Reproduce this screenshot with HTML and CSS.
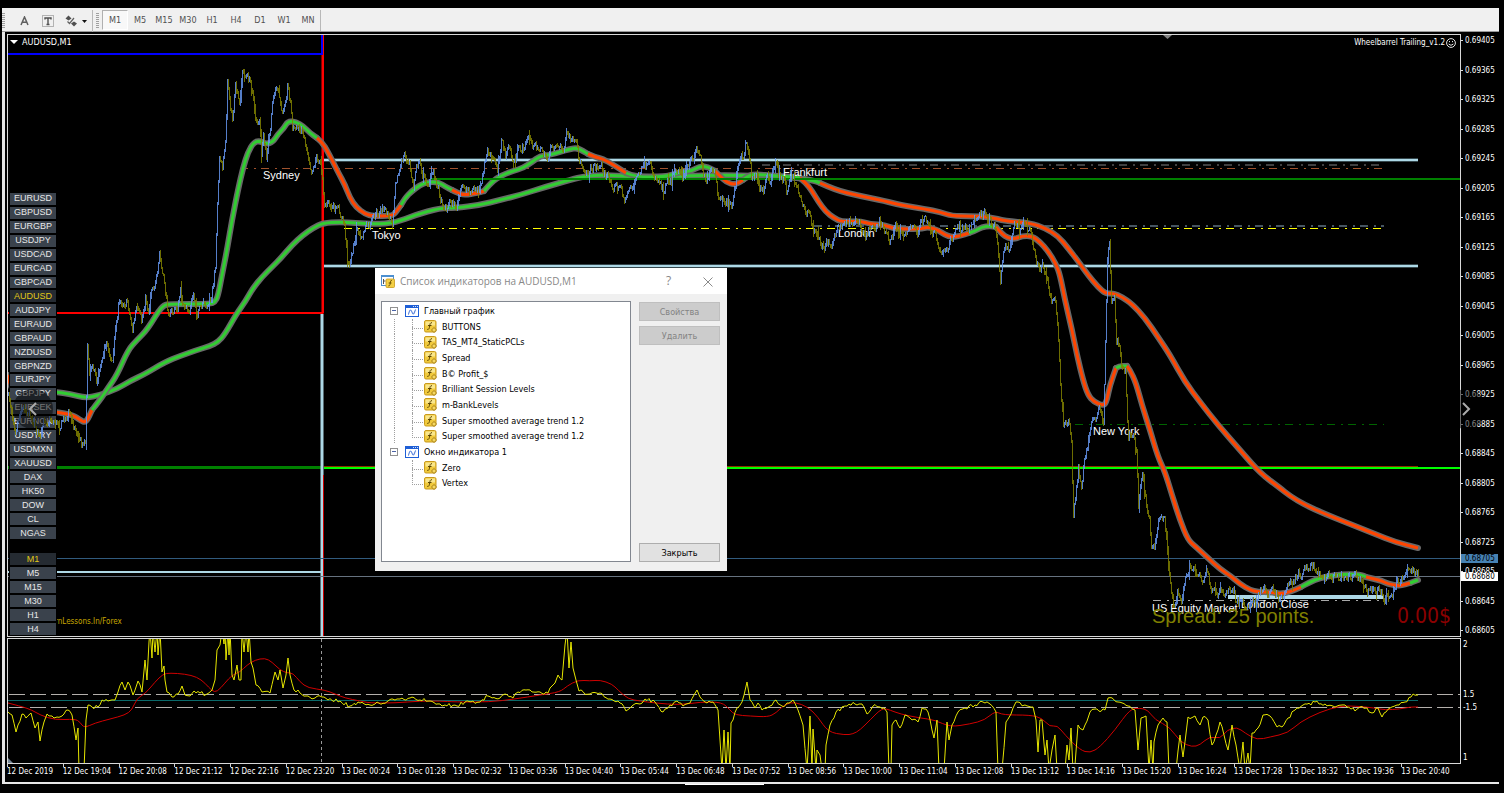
FILE: index.html
```html
<!DOCTYPE html>
<html lang="ru">
<head>
    <meta charset="UTF-8">
    <meta name="viewport" content="width=device-width, initial-scale=1.0">
    <title>AUDUSD,M1</title>
    <link rel="stylesheet" href="styles.css">
</head>
<body>
    <!-- shared icons -->
    <svg class="sprite" aria-hidden="true">
        <symbol id="icon-window" viewBox="0 0 14 12">
            <rect x="0.5" y="0.5" width="13" height="11" fill="#fff" stroke="#1f5fd6"/>
            <rect x="0" y="0" width="14" height="3" fill="#1f5fd6"/>
            <path d="M8 1.5h1M10 1.5h1M12 1.5h1" stroke="#fff" stroke-width="0.8"/>
            <path d="M3 9.5C4 9.5 4 5 5.5 5S7 9 8.300 9S9.500 5 11 4.500" fill="none" stroke="#5c86dd" stroke-width="1.200"/>
        </symbol>
        <symbol id="icon-function" viewBox="0 0 13 13">
            <rect x="0.5" y="0.5" width="11.500" height="11.500" rx="1.500" fill="#f0c93c" stroke="#c99a1c"/>
            <rect x="1.500" y="1.500" width="9.500" height="4" fill="#f9e68c"/>
            <path d="M8 2.800C6.200 2.200 6 4 5.700 6S5 9.800 3.300 9.400M4 5.500h3.500" fill="none" stroke="#5a4300" stroke-width="1"/>
            <path d="M10 7.500l2.500 2.500L10 12.500L7.500 10z" fill="#f6d860" stroke="#9c7410" stroke-width="0.900"/>
        </symbol>
    </svg>

    <div class="toolbar">
        <span class="grip"></span>
        <button class="tool" aria-label="Text"><svg width="9" height="10" viewBox="0 0 9 10"><path d="M1 9L4.500 1L8 9M2.500 6.200h4" fill="none" stroke="#606060" stroke-width="1.500"/></svg></button>
        <button class="tool" aria-label="Text label"><svg width="12" height="12" viewBox="0 0 12 12"><rect x="0.5" y="0.5" width="11" height="11" fill="none" stroke="#777" stroke-dasharray="1 1"/><path d="M3 4.500V3h6v1.500M6 3v6.500M4.500 9.500h3" fill="none" stroke="#505050" stroke-width="1.400"/></svg></button>
        <button class="tool wide" aria-label="Arrows"><svg width="22" height="12" viewBox="0 0 22 12"><path d="M3.500 0.500l3 3-3 2-3-2z" fill="#505050"/><path d="M9 11.500l-3-3 3-2 3 2z" fill="#505050"/><path d="M2.500 6.500l2 2 4.500-5.500" fill="none" stroke="#606060" stroke-width="1.200"/><path d="M17 5h5l-2.500 3z" fill="#111"/></svg></button>
        <span class="separator"></span>
        <span class="grip"></span>
        <div class="periods">
            <button class="active">M1</button>
            <button>M5</button>
            <button>M15</button>
            <button>M30</button>
            <button>H1</button>
            <button>H4</button>
            <button>D1</button>
            <button>W1</button>
            <button>MN</button>
        </div>
    </div>

    <main class="terminal">
        <div class="row main-row">
            <section class="pane main-pane">
                <svg class="layer" viewBox="8 35 1452 601" preserveAspectRatio="none">
                    <g fill="none">
                        <path d="M323.500 35V313" stroke="#f00" stroke-width="1"/>
                        <path d="M322.500 55V313H8" stroke="#f00" stroke-width="2"/>
                        <path d="M8 54H322V35" stroke="#00f" stroke-width="2"/>
                        <path d="M8 467.500H322" stroke="#008000" stroke-width="3"/>
                        <path d="M8 572H322" stroke="#add8e6" stroke-width="2"/>
                        <path d="M322 314V636" stroke="#add8e6" stroke-width="3"/>
                        <path d="M323.500 475V636" stroke="#c00" stroke-width="1"/>
                        <path d="M324 160H1418M324 266H1418" stroke="#35474c" stroke-width="4"/>
                        <path d="M324 160H1418M324 266H1418" stroke="#add8e6" stroke-width="2"/>
                        <path d="M240 168.500H1384" stroke="#a0522d" stroke-dasharray="8 6 2 5"/>
                        <path d="M762 165H1384" stroke="#404040" stroke-width="2" stroke-dasharray="8 6 2 5"/>
                        <path d="M344 228.500H1384" stroke="#ff0" stroke-dasharray="8 6 2 5"/>
                        <path d="M814 226H1384" stroke="#465560" stroke-width="2" stroke-dasharray="8 6 2 5"/>
                        <path d="M1075 424.500H1384" stroke="#006400" stroke-dasharray="8 6 2 5"/>
                        <path d="M1153 600.500H1384" stroke="#a9a9a9" stroke-dasharray="8 6 2 5"/>
                        <path d="M324 466.500H1418" stroke="#8b3000" stroke-width="1"/>
                        <path d="M324 468H1460" stroke="#0f0" stroke-width="2"/>
                        <path d="M8 558.500H1460" stroke="#315b7e"/>
                        <path d="M8 576.500H1460" stroke="#66727f"/>
                        <path d="M1228 597H1384" stroke="#add8e6" stroke-width="4"/>
                    </g>
                    <g id="averages"></g>
                    <path d="M430 179H1460" stroke="#008000" stroke-width="2"/>
                    <path d="M1163 35h9l-4.500 4z" fill="#808080"/>
                </svg>
                <h1 class="symbol">AUDUSD,M1</h1>
                <span class="expert">Wheelbarrel Trailing_v1.2
                    <svg width="10" height="10" viewBox="0 0 10 10"><circle cx="5" cy="5" r="4.400" fill="none" stroke="#fff" stroke-width="0.900"/><path d="M3.500 3v1.200M6.500 3v1.200M2.600 6Q5 8.600 7.400 6" fill="none" stroke="#fff" stroke-width="0.900"/></svg>
                </span>
                <span class="copyright">www.LearnLessons.In/Forex</span>

                <span class="session sydney">Sydney</span>
                <span class="session tokyo">Tokyo</span>
                <span class="session frankfurt">Frankfurt</span>
                <span class="session london">London</span>
                <span class="session new-york">New York</span>
                <span class="session us-equity">US Equity Market</span>
                <span class="session london-close">London Close</span>
                <span class="spread">Spread: 25 points.</span>
                <span class="profit">0.00$</span>

                <div class="symbols">
                    <button>EURUSD</button>
                    <button>GBPUSD</button>
                    <button>EURGBP</button>
                    <button>USDJPY</button>
                    <button>USDCAD</button>
                    <button>EURCAD</button>
                    <button>GBPCAD</button>
                    <button class="current">AUDUSD</button>
                    <button>AUDJPY</button>
                    <button>EURAUD</button>
                    <button>GBPAUD</button>
                    <button>NZDUSD</button>
                    <button>GBPNZD</button>
                    <button>EURJPY</button>
                    <button>GBPJPY</button>
                    <button>EURSEK</button>
                    <button>EURNOK</button>
                    <button>USDTRY</button>
                    <button>USDMXN</button>
                    <button>XAUUSD</button>
                    <button>DAX</button>
                    <button>HK50</button>
                    <button>DOW</button>
                    <button>CL</button>
                    <button>NGAS</button>
                </div>
                <div class="symbols timeframes">
                    <button class="current">M1</button>
                    <button>M5</button>
                    <button>M15</button>
                    <button>M30</button>
                    <button>H1</button>
                    <button>H4</button>
                </div>
                <svg class="layer candles" viewBox="8 35 1452 601" preserveAspectRatio="none">
                    <path id="bears" stroke="#808000"/>
                    <path id="bulls" stroke="#6495ed"/>
                </svg>
            </section>
            <div class="scale">
                <ol class="prices">
                    <li>0.69405</li>
                    <li>0.69365</li>
                    <li>0.69325</li>
                    <li>0.69285</li>
                    <li>0.69245</li>
                    <li>0.69205</li>
                    <li>0.69165</li>
                    <li>0.69125</li>
                    <li>0.69085</li>
                    <li>0.69045</li>
                    <li>0.69005</li>
                    <li>0.68965</li>
                    <li>0.68925</li>
                    <li>0.68885</li>
                    <li>0.68845</li>
                    <li>0.68805</li>
                    <li>0.68765</li>
                    <li>0.68725</li>
                    <li>0.68685</li>
                    <li>0.68645</li>
                    <li>0.68605</li>
                </ol>
                <span class="tag ask">0.68705</span>
                <span class="tag bid">0.68680</span>
            </div>
        </div>

        <div class="row sub-row">
            <section class="pane sub-pane">
                <svg class="layer" viewBox="8 639 1452 124" preserveAspectRatio="none">
                    <g fill="none">
                        <path d="M8 694.500H1460M8 707.500H1460" stroke="#b4b0ac" stroke-dasharray="16 5" stroke-dashoffset="-1"/>
                        <path d="M8 700.500H1418" stroke="#0a6a6a" stroke-width="1"/>
                        <path d="M321.500 639V763" stroke="#999" stroke-dasharray="3 3"/>
                        <path id="signal" stroke="#d00000"/>
                        <path id="vertex" stroke="#e6e600"/>
                    </g>
                    <path d="M8 758l5 5H8z" fill="#778899"/>
                </svg>
            </section>
            <div class="scale levels">
                <span>2</span>
                <span class="upper">1.5</span>
                <span class="lower">-1.5</span>
                <span class="bottom">1</span>
            </div>
        </div>

        <ol class="times">
            <li>12 Dec 2019</li>
            <li>12 Dec 19:04</li>
            <li>12 Dec 20:08</li>
            <li>12 Dec 21:12</li>
            <li>12 Dec 22:16</li>
            <li>12 Dec 23:20</li>
            <li>13 Dec 00:24</li>
            <li>13 Dec 01:28</li>
            <li>13 Dec 02:32</li>
            <li>13 Dec 03:36</li>
            <li>13 Dec 04:40</li>
            <li>13 Dec 05:44</li>
            <li>13 Dec 06:48</li>
            <li>13 Dec 07:52</li>
            <li>13 Dec 08:56</li>
            <li>13 Dec 10:00</li>
            <li>13 Dec 11:04</li>
            <li>13 Dec 12:08</li>
            <li>13 Dec 13:12</li>
            <li>13 Dec 14:16</li>
            <li>13 Dec 15:20</li>
            <li>13 Dec 16:24</li>
            <li>13 Dec 17:28</li>
            <li>13 Dec 18:32</li>
            <li>13 Dec 19:36</li>
            <li>13 Dec 20:40</li>
        </ol>
    </main>
    <div class="tab-mark"></div>

    <button class="nav prev" aria-label="Previous"><svg width="10" height="16" viewBox="0 0 10 16"><path d="M8 2L2 8l6 6" fill="none" stroke="#aaa" stroke-width="2"/></svg></button>
    <button class="nav next" aria-label="Next"><svg width="10" height="16" viewBox="0 0 10 16"><path d="M2 2l6 6-6 6" fill="none" stroke="#aaa" stroke-width="2"/></svg></button>

    <div class="dialog" role="dialog" aria-labelledby="dialogTitle">
        <div class="dialog-title">
            <svg width="14" height="13" viewBox="0 0 14 13"><rect x="0.5" y="0.5" width="12" height="10" fill="#fff" stroke="#4c8fd0"/><path d="M0 1h13" stroke="#4c8fd0" stroke-width="2"/><path d="M2.500 4v5M2.500 6h2" stroke="#555" stroke-width="1"/><rect x="5" y="4" width="8.500" height="8.500" rx="1" fill="#f3cf45" stroke="#c99a1c" stroke-width="0.800"/><path d="M10.800 5.500C9 5 9.500 8 9 9.500S8 11 7.300 10.800M7.700 8h2.800" fill="none" stroke="#5a4300" stroke-width="0.900"/></svg>
            <h2 id="dialogTitle">Список индикаторов на AUDUSD,M1</h2>
            <button aria-label="Help"><span>?</span></button>
            <button aria-label="Close"><svg width="10" height="10" viewBox="0 0 10 10"><path d="M0.500 0.500l9 9M9.500 0.500l-9 9" stroke="#8a8a8a" fill="none"/></svg></button>
        </div>
        <div class="dialog-body">
            <div class="tree">
                <ul>
                    <li class="group open"><i class="toggle"></i><svg class="win"><use href="#icon-window"/></svg>Главный график</li>
                    <li class="leaf inner"><svg class="fn"><use href="#icon-function"/></svg>BUTTONS</li>
                    <li class="leaf inner"><svg class="fn"><use href="#icon-function"/></svg>TAS_MT4_StaticPCLs</li>
                    <li class="leaf inner"><svg class="fn"><use href="#icon-function"/></svg>Spread</li>
                    <li class="leaf inner"><svg class="fn"><use href="#icon-function"/></svg>B© Profit_$</li>
                    <li class="leaf inner"><svg class="fn"><use href="#icon-function"/></svg>Brilliant Session Levels</li>
                    <li class="leaf inner"><svg class="fn"><use href="#icon-function"/></svg>m-BankLevels</li>
                    <li class="leaf inner"><svg class="fn"><use href="#icon-function"/></svg>Super smoothed average trend 1.2</li>
                    <li class="leaf inner last"><svg class="fn"><use href="#icon-function"/></svg>Super smoothed average trend 1.2</li>
                    <li class="group"><i class="toggle"></i><svg class="win"><use href="#icon-window"/></svg>Окно индикатора 1</li>
                    <li class="leaf"><svg class="fn"><use href="#icon-function"/></svg>Zero</li>
                    <li class="leaf last"><svg class="fn"><use href="#icon-function"/></svg>Vertex</li>
                </ul>
            </div>
            <div class="actions">
                <button disabled>Свойства</button>
                <button disabled>Удалить</button>
                <button class="close">Закрыть</button>
            </div>
        </div>
    </div>

    <script src="chart.js"></script>
</body>
</html>
```
FILE: styles.css
```css
* {
    box-sizing: border-box;
}
body {
    margin: 0;
    padding: 8px 5px 8px 2px;
    height: 100vh;
    display: flex;
    flex-direction: column;
    background-color: #000;
    color: #fff;
    font-family: "DejaVu Sans Condensed", "Open Sans", sans-serif;
    font-size: 8px;
    line-height: 12px;
}
button {
    font: inherit;
    color: inherit;
    padding: 0;
    border: none;
    background: none;
}
h1, h2, ol, ul {
    margin: 0;
    padding: 0;
    font-weight: normal;
    list-style: none;
}
.sprite {
    position: absolute;
    width: 0;
    height: 0;
}

/* Toolbar */
.toolbar {
    height: 24px;
    flex: none;
    display: flex;
    align-items: center;
    padding-top: 2px;
    background-color: #f0f0f0;
    border-bottom: 1px solid #999;
    color: #505050;
}
.grip {
    width: 3px;
    height: 16px;
    background: repeating-linear-gradient(#a0a0a0 0 1px, #f0f0f0 1px 2px);
}
.tool {
    width: 24px;
    height: 20px;
    display: flex;
    align-items: center;
    justify-content: center;
}
.tool:first-of-type {
    margin-left: 7px;
}
.tool.wide {
    width: 32px;
}
.separator {
    width: 1px;
    height: 22px;
    margin-right: 3px;
    background-color: #b8b8b8;
}
.periods {
    display: flex;
    width: 222px;
    height: 21px;
    padding: 0 0 1px 3px;
    border-right: 1px solid #b8b8b8;
}
.periods button {
    flex: 1;
    font-size: 9px;
}
.periods .active {
    border: 1px solid #b0b0b0;
    border-right-color: #fff;
    border-bottom-color: #fff;
    background-color: #f8f8f8;
}

/* Chart window */
.terminal {
    flex: 1;
    display: flex;
    flex-direction: column;
    padding: 2px 0 0 2px;
    border-left: 3px solid #e4e4e4;
    border-bottom: 2px solid #e8e8e8;
}
.row {
    display: flex;
}
.main-row {
    flex: 1;
    margin-bottom: 1px;
}
.sub-row {
    height: 126px;
}
.pane {
    position: relative;
    flex: 1;
    border: 1px solid #d8d8d8;
}
.layer {
    position: absolute;
    inset: 0;
    width: 100%;
    height: 100%;
}
.candles {
    pointer-events: none;
}
.candles path {
    opacity: 0.85;
}
.scale {
    position: relative;
    width: 38px;
}
.prices {
    height: 100%;
    display: flex;
    flex-direction: column;
    justify-content: space-between;
}
.prices li {
    display: flex;
    align-items: center;
    gap: 2px;
    line-height: 13px;
}
.prices li::before {
    content: "";
    width: 2px;
    height: 1px;
    background-color: #ddd;
}
.tag {
    position: absolute;
    left: 0;
    right: 1px;
    height: 9px;
    line-height: 9px;
    padding-left: 4px;
    color: #000;
}
.ask {
    top: 520px;
    background-color: #4682b4;
}
.bid {
    top: 538px;
    background-color: #fff;
}
.levels span {
    position: absolute;
    left: 2px;
    top: 1px;
}
.levels .upper {
    top: 51px;
}
.levels .lower {
    top: 64px;
}
.levels .bottom {
    top: 114px;
}
.times {
    display: flex;
    height: 18px;
    padding-right: 42px;
}
.times li {
    flex: 1;
    white-space: nowrap;
    padding-top: 2px;
    background: linear-gradient(#ccc, #ccc) 0 0 / 1px 3px no-repeat;
}
.tab-mark {
    width: 79px;
    height: 1px;
    flex: none;
    margin-left: 683px;
    background-color: #fff;
}

/* Texts over the chart */
.symbol {
    position: absolute;
    left: 14px;
    top: 1px;
    font-size: 9px;
}
.symbol::before {
    content: "";
    position: absolute;
    left: -12px;
    top: 4px;
    border: 4px solid transparent;
    border-top-color: #fff;
    border-bottom: none;
}
.expert {
    position: absolute;
    right: 4px;
    top: 2px;
    display: flex;
    align-items: center;
    gap: 1px;
}
.copyright {
    position: absolute;
    left: 15px;
    bottom: 8px;
    color: #c8a800;
}
.session {
    position: absolute;
    font: 11px/14px "Liberation Sans", sans-serif;
    white-space: nowrap;
}
.sydney { left: 255px; top: 133px; }
.tokyo { left: 364px; top: 193px; }
.frankfurt { left: 775px; top: 130px; }
.london { left: 830px; top: 191px; }
.new-york { left: 1085px; top: 389px; }
.us-equity { left: 1144px; top: 566px; }
.london-close { left: 1233px; top: 562px; }
.spread {
    position: absolute;
    left: 1144px;
    top: 569px;
    font: 20px/24px "Liberation Sans", sans-serif;
    color: #808000;
}
.profit {
    position: absolute;
    right: 9px;
    top: 569px;
    font-size: 21px;
    line-height: 24px;
    color: #8b0000;
}

/* Symbol buttons */
.symbols {
    position: absolute;
    left: 2px;
    top: 158px;
    width: 46px;
    height: 346px;
    display: flex;
    flex-direction: column;
    gap: 2px;
    font: 9px/11px "Liberation Sans", sans-serif;
    outline: 1px solid #000;
    background-color: #000;
}
.symbols button {
    flex: 1;
    background-color: #3a424c;
    color: #e8e8e8;
}
.symbols .current {
    background-color: #252b32;
    color: #e0c818;
}
.timeframes {
    top: 518px;
    height: 82px;
}

/* Gallery arrows */
.nav {
    position: absolute;
    top: 389px;
    width: 40px;
    height: 40px;
    border-radius: 50%;
    background-color: rgba(0, 0, 0, 0.5);
    display: flex;
    align-items: center;
    justify-content: center;
}
.prev {
    left: 13px;
}
.next {
    right: 18px;
}

/* Indicators dialog */
.dialog {
    position: absolute;
    left: 375px;
    top: 268px;
    width: 352px;
    background-color: #f0f0f0;
    color: #000;
    font-size: 9px;
}
.dialog-title {
    display: flex;
    align-items: center;
    height: 26px;
    padding-left: 6px;
    background-color: #fff;
    color: #888;
    font-family: "Open Sans", sans-serif;
}
.dialog-title h2 {
    flex: 1;
    margin-left: 5px;
    font-size: 10px;
}
.dialog-title button {
    width: 39px;
    height: 24px;
    font-size: 12px;
}
.dialog-title svg {
    vertical-align: middle;
}
.dialog-body {
    display: flex;
    gap: 8px;
    padding: 7px 7px 9px 6px;
}
.tree {
    flex: 1;
    height: 261px;
    border: 1px solid #828790;
    background-color: #fff;
}
.tree ul {
    height: 189px;
    padding-top: 1px;
    display: flex;
    flex-direction: column;
}
.tree li {
    position: relative;
    flex: 1;
    display: flex;
    align-items: center;
    white-space: nowrap;
}
.win {
    width: 14px;
    height: 12px;
    margin: 0 5px 0 7px;
}
.fn {
    width: 13px;
    height: 13px;
    margin-right: 5px;
}
.group {
    padding-left: 8px;
}
.toggle {
    width: 8px;
    height: 8px;
    border: 1px solid #919191;
    background: linear-gradient(#4b63a7, #4b63a7) 1px 50% / 4px 1px no-repeat #fff;
}
.leaf {
    padding-left: 42px;
}
.leaf::before {
    content: "";
    position: absolute;
    left: 30px;
    top: 0;
    width: 10px;
    height: 9px;
    border: dotted #a0a0a0;
    border-width: 0 0 1px 1px;
}
.leaf:not(.last)::after {
    content: "";
    position: absolute;
    left: 30px;
    top: 8px;
    bottom: 0;
    border-left: 1px dotted #a0a0a0;
}
/* line joining the two groups */
.inner {
    background: repeating-linear-gradient(#a0a0a0 0 1px, #fff 1px 2px) 12px 0 / 1px 100% no-repeat;
}
.actions {
    width: 81px;
    display: flex;
    flex-direction: column;
    gap: 5px;
    padding-top: 1px;
}
.actions button {
    height: 19px;
    border: 1px solid #bfbfbf;
    background-color: #ccc;
    color: #838383;
}
.actions .close {
    margin-top: auto;
    border-color: #adadad;
    background-color: #e1e1e1;
    color: #000;
}
```
FILE: chart.js
```js
var GREEN = "#32cd32";
var RED = "#ff4500";

// close prices as chart points
var prices = "8,395 10,400 16,425 22,405 30,410 38,430 41,440 45,420 50,417 60,423 70,412 75,425 82,443 86,437 88,345 90,370 93,358 97,382 100,365 104,345 108,348 113,358 116,330 119,305 124,300 128,300 133,328 137,308 142,325 146,297 149,310 152,285 158,278 160,256 163,275 165,285 168,308 173,312 178,308 181,292 186,312 190,312 194,294 198,312 205,308 212,300 216,265 218,200 220,150 223,170 226,140 228,80 230,95 233,120 236,88 240,108 243,72 248,77 253,87 256,118 260,120 262,155 264,140 267,160 271,130 274,95 277,86 280,100 283,116 288,82 291,100 293,125 298,130 303,128 308,150 312,166 317,154 321,165 323,175 325,200 330,205 335,210 341,215 345,225 348,258 351,262 355,240 358,228 362,240 366,227 370,228 375,218 380,212 384,207 388,215 393,221 396,175 400,170 405,155 410,165 414,188 417,160 420,163 425,178 430,182 434,172 438,185 442,200 447,207 451,200 457,206 462,190 467,187 472,190 482,188 485,165 488,152 493,160 498,166 502,138 506,155 510,148 514,163 520,150 525,145 530,137 535,148 540,145 545,156 548,158 553,145 558,142 563,150 567,137 572,142 577,148 580,163 585,167 590,168 597,165 602,165 606,175 612,182 617,185 622,190 626,200 630,186 635,183 640,172 645,167 650,170 655,175 660,178 664,188 668,176 672,178 676,163 680,170 685,172 690,168 697,147 702,160 706,178 710,172 715,175 718,195 722,205 727,202 732,205 735,190 738,170 741,160 744,155 747,140 750,155 752,175 757,172 760,188 764,192 768,172 772,180 776,164 780,175 785,180 787,193 792,170 795,178 799,190 803,200 807,215 810,212 813,228 820,240 825,246 830,240 837,235 842,224 850,220 858,220 867,232 872,224 880,222 885,228 890,244 895,228 902,230 910,228 918,232 924,217 930,230 936,238 942,256 948,245 952,240 957,230 962,228 970,225 978,218 982,212 988,220 995,222 998,240 1001,278 1005,247 1010,250 1015,227 1020,230 1025,226 1030,232 1036,260 1040,272 1044,267 1048,285 1052,300 1055,293 1058,320 1060,355 1062,400 1064,425 1070,420 1072,445 1074,515 1076,500 1079,470 1082,485 1084,467 1088,450 1092,420 1096,415 1100,407 1104,425 1106,340 1108,255 1110,245 1112,300 1115,300 1117,345 1120,342 1122,365 1126,370 1129,440 1133,430 1137,450 1139,508 1143,470 1147,505 1150,520 1152,555 1155,550 1159,522 1165,515 1168,550 1172,590 1175,608 1178,595 1182,603 1186,580 1190,567 1196,570 1202,575 1208,572 1212,592 1218,590 1225,597 1232,587 1236,600 1242,604 1248,600 1256,603 1262,590 1266,586 1272,592 1280,598 1286,590 1292,582 1298,575 1303,572 1310,567 1316,567 1322,572 1330,575 1340,575 1350,573 1358,578 1362,576 1368,588 1374,588 1380,592 1384,597 1390,592 1400,580 1408,575 1414,571 1418,575";

var fast = [
    [RED, "8,375 10,390 30,408 56,412 73,415 80,420 86,423 92,410"],
    [GREEN, "92,410 100,400 108,388 117,375 128,350 137,340 145,332 152,322 158,312 164,305 170,304 210,304 215,302 218,296 222,275 227,250 232,220 238,190 243,168 248,152 254,142 260,141 266,144 273,142 278,134 284,128 288,121 296,122 303,126 310,133 317,138"],
    [RED, "317,138 322,142 328,152 338,172 345,185 350,198 356,207 365,214 373,216 392,216 396,212 401,205"],
    [GREEN, "401,205 405,198 412,191 420,185 428,182 438,182 446,187 452,190"],
    [RED, "452,190 458,193 464,195 478,193 484,191"],
    [GREEN, "484,191 490,184 497,178 505,174 513,171 523,168 532,162 540,156 550,155 560,152 570,149 577,148 583,151 588,154"],
    [RED, "588,154 595,157 603,159 612,164 620,169 626,173"],
    [GREEN, "626,173 635,177 665,177 680,172 692,171 700,166 708,167 715,171"],
    [RED, "715,171 720,176 726,182 735,185 743,180"],
    [GREEN, "743,180 748,176 755,174 775,176 795,177 800,178"],
    [RED, "800,178 806,183 812,191 818,201 826,212 834,218 842,222 860,221 870,224 885,225 895,229 920,229 928,227 938,230 945,235 952,237 960,236 969,233"],
    [GREEN, "969,233 975,231 982,227 990,226 996,227"],
    [RED, "996,227 1002,234 1008,238 1015,239 1022,236 1032,236 1040,242 1048,251 1056,264 1060,275 1065,300 1072,330 1077,355 1083,380 1088,395 1094,402 1104,406 1107,400 1110,385 1116,368"],
    [GREEN, "1116,368 1119,366 1127,366"],
    [RED, "1127,366 1130,370 1136,383 1142,405 1150,430 1158,457 1165,472 1172,495 1180,520 1188,540 1196,547 1208,558 1220,569 1232,577 1240,584 1250,590 1258,592 1270,592 1280,594 1290,592 1301,587"],
    [GREEN, "1301,587 1310,582 1320,578 1335,575 1350,574 1362,575 1366,577"],
    [RED, "1366,577 1380,580 1388,584 1400,586 1410,583"],
    [GREEN, "1410,583 1418,580"]
];

var slow = [
    [GREEN, "8,380 30,389 56,392 70,394 86,398 100,395 117,389 130,381 145,374 165,362 180,356 197,350 210,346 218,342 225,334 237,313 245,302 253,288 262,277 272,267 281,258 292,245 303,235 313,228 323,223 340,222 355,223 375,224 395,223 415,215 440,208 455,208 480,205 500,200 520,195 545,187 570,180 585,176 605,175 640,177 720,175 760,176 800,178 815,181 820,183"],
    [RED, "820,183 835,190 860,196 885,201 900,205 925,209 940,212 952,216 970,216 990,217 1005,221 1030,223 1045,228 1058,236 1068,248 1078,261 1088,275 1098,287 1106,294 1113,293 1122,297 1132,304 1145,318 1158,337 1170,355 1185,382 1200,402 1218,425 1240,450 1260,473 1280,488 1290,496 1305,505 1325,514 1350,524 1375,534 1395,542 1418,548"]
];

var vertex = "8,712 12,715 16,732 18,725 22,714 26,718 31,713 35,728 38,722 40,741 44,722 47,714 52,716 57,717 62,716 68,710 72,715 76,740 78,728 79,770 81,770 82,770 84,770 86,720 88,705 92,707 98,707 102,700 108,701 115,700 118,692 122,682 125,690 128,682 133,695 138,681 142,692 145,660 147,680 149,642 150,630 152,658 153,630 155,652 157,630 158,655 160,630 162,672 164,666 165,680 167,692 172,697 178,694 182,686 185,695 190,696 194,691 200,693 207,694 212,690 215,680 217,650 220,645 222,630 224,644 225,630 226,660 228,630 229,655 230,630 232,675 234,680 237,665 239,680 241,680 242,630 244,652 246,630 248,652 249,630 251,662 253,668 256,685 262,692 270,693 275,672 278,680 280,670 283,688 286,675 288,658 290,675 294,690 300,693 308,696 315,698 322,697 328,700 340,701 350,706 360,703 375,704 388,701 395,700 400,699 410,698 420,700 430,701 445,705 457,706 465,702 480,702 488,696 500,698 505,694 513,698 518,692 530,690 540,692 548,693 553,685 558,675 562,680 565,645 567,630 569,668 571,642 573,668 576,680 579,691 590,694 600,693 610,699 620,703 626,711 632,706 640,704 645,699 655,702 663,712 668,708 677,701 683,706 690,703 697,690 700,697 707,703 713,702 718,710 720,740 722,770 724,730 726,770 728,732 730,770 731,723 733,720 737,708 742,702 747,682 750,700 755,708 758,703 762,710 770,706 776,700 782,706 787,703 793,700 798,710 803,725 807,770 810,716 812,770 813,729 816,770 817,750 820,755 822,770 825,770 826,745 830,725 836,712 845,706 855,704 862,704 867,714 873,706 880,707 887,712 889,770 891,770 892,725 896,720 900,728 905,715 910,718 918,722 922,708 928,712 932,730 934,738 937,720 939,770 944,770 947,722 949,740 952,725 958,712 965,708 975,705 983,702 990,704 996,712 998,770 1002,770 1006,722 1011,714 1016,702 1025,705 1033,707 1036,720 1038,752 1040,720 1042,720 1045,755 1047,740 1049,770 1052,750 1055,735 1057,770 1065,770 1067,745 1069,760 1071,728 1073,770 1075,765 1078,725 1083,730 1090,712 1095,709 1105,710 1108,698 1118,702 1128,706 1135,710 1138,750 1141,718 1146,716 1149,770 1151,740 1153,770 1154,742 1158,725 1163,718 1167,722 1169,770 1176,770 1180,735 1183,757 1188,717 1195,716 1200,725 1203,717 1208,720 1212,745 1216,735 1220,722 1224,735 1228,750 1232,725 1236,745 1240,770 1243,742 1245,770 1248,753 1250,770 1252,733 1258,728 1263,715 1270,716 1277,727 1282,727 1288,718 1295,710 1303,705 1315,702 1325,704 1335,707 1345,705 1355,711 1360,707 1367,708 1372,713 1378,708 1382,717 1390,708 1397,705 1405,702 1411,697 1413,694 1418,695";

var signal = "8,703 20,706 32,710 40,715 55,720 75,719 80,722 84,728 95,723 110,719 125,715 132,710 137,698 145,694 155,682 163,674 170,673 185,674 197,677 205,683 212,691 217,692 225,683 232,675 240,672 247,665 255,660 265,658 272,662 280,670 287,673 293,673 300,682 308,688 325,690 335,694 345,698 360,701 370,703 395,703 420,701 440,701 455,702 490,702 515,699 540,695 560,692 567,686 578,680 590,681 600,680 612,684 618,690 628,699 640,701 655,703 680,705 700,702 722,702 730,710 735,715 750,716 768,717 776,713 785,704 795,702 808,707 818,717 828,732 845,735 853,734 860,730 870,720 882,708 890,710 900,714 920,718 935,720 950,727 970,724 985,720 995,711 1003,715 1030,715 1042,718 1050,727 1057,725 1065,735 1080,750 1090,753 1100,747 1115,730 1130,709 1140,708 1148,710 1155,720 1170,727 1180,742 1192,747 1200,745 1210,736 1220,739 1227,730 1237,727 1245,733 1257,740 1270,737 1288,733 1300,722 1320,712 1340,706 1355,706 1375,708 1385,710 1400,709 1410,707 1418,707";

function parse(text) {
    return text.split(" ").map(function(pair) {
        return pair.split(",").map(Number);
    });
}

var seed = 7;
function random() {
    seed = (seed * 16807) % 2147483647;
    return seed / 2147483647;
}

function valueAt(points, x) {
    for (var i = 1; i < points.length; i++) {
        if (x <= points[i][0]) {
            var a = points[i - 1], b = points[i];
            return a[1] + (b[1] - a[1]) * (x - a[0]) / (b[0] - a[0]);
        }
    }
    return points[points.length - 1][1];
}

function drawCandles() {
    var points = parse(prices);
    var bulls = "", bears = "";
    var drift = 0;
    var open = valueAt(points, 8);
    for (var x = 8; x < 1419; x++) {
        drift = drift * 0.6 + (random() - 0.5) * 9;
        var close = valueAt(points, x + 1) + drift;
        // a long wick now and then
        var wick = random() < 0.12 ? 8 : 2;
        var top = Math.min(open, close) - random() * wick;
        var bottom = Math.max(open, close) + 1 + random() * wick;
        var line = "M" + (x + 0.5) + " " + Math.round(top) + "V" + Math.round(bottom);
        if (close < open) {
            bulls += line;
        } else {
            bears += line;
        }
        open = close;
    }
    document.getElementById("bulls").setAttribute("d", bulls);
    document.getElementById("bears").setAttribute("d", bears);
}

// curve through the middles of the segments
function smooth(points) {
    var d = "M" + points[0];
    for (var i = 1; i < points.length - 1; i++) {
        var mx = (points[i][0] + points[i + 1][0]) / 2;
        var my = (points[i][1] + points[i + 1][1]) / 2;
        d += "Q" + points[i] + " " + mx + "," + my;
    }
    return d + "L" + points[points.length - 1];
}

function addPath(parent, d, color, width, cap) {
    var path = document.createElementNS("http://www.w3.org/2000/svg", "path");
    path.setAttribute("d", d);
    path.setAttribute("fill", "none");
    path.setAttribute("stroke", color);
    path.setAttribute("stroke-width", width);
    path.setAttribute("stroke-linecap", cap);
    parent.appendChild(path);
}

function drawAverage(parts) {
    var group = document.getElementById("averages");
    parts.forEach(function(part) {
        addPath(group, smooth(parse(part[1])), "#696969", 6, "round");
    });
    parts.forEach(function(part) {
        addPath(group, smooth(parse(part[1])), part[0], 3, "butt");
    });
}

function drawVertex() {
    var points = parse(vertex);
    var d = "M" + points[0];
    for (var i = 1; i < points.length; i++) {
        var a = points[i - 1], b = points[i];
        // small ripple on the long quiet stretches
        for (var x = a[0] + 2; x < b[0] - 1; x += 2) {
            d += "L" + x + "," + (valueAt([a, b], x) + (random() - 0.5) * 4).toFixed(1);
        }
        d += "L" + b;
    }
    document.getElementById("vertex").setAttribute("d", d);
}

drawAverage(slow);
drawAverage(fast);
drawCandles();
drawVertex();
document.getElementById("signal").setAttribute("d", smooth(parse(signal)));
```
